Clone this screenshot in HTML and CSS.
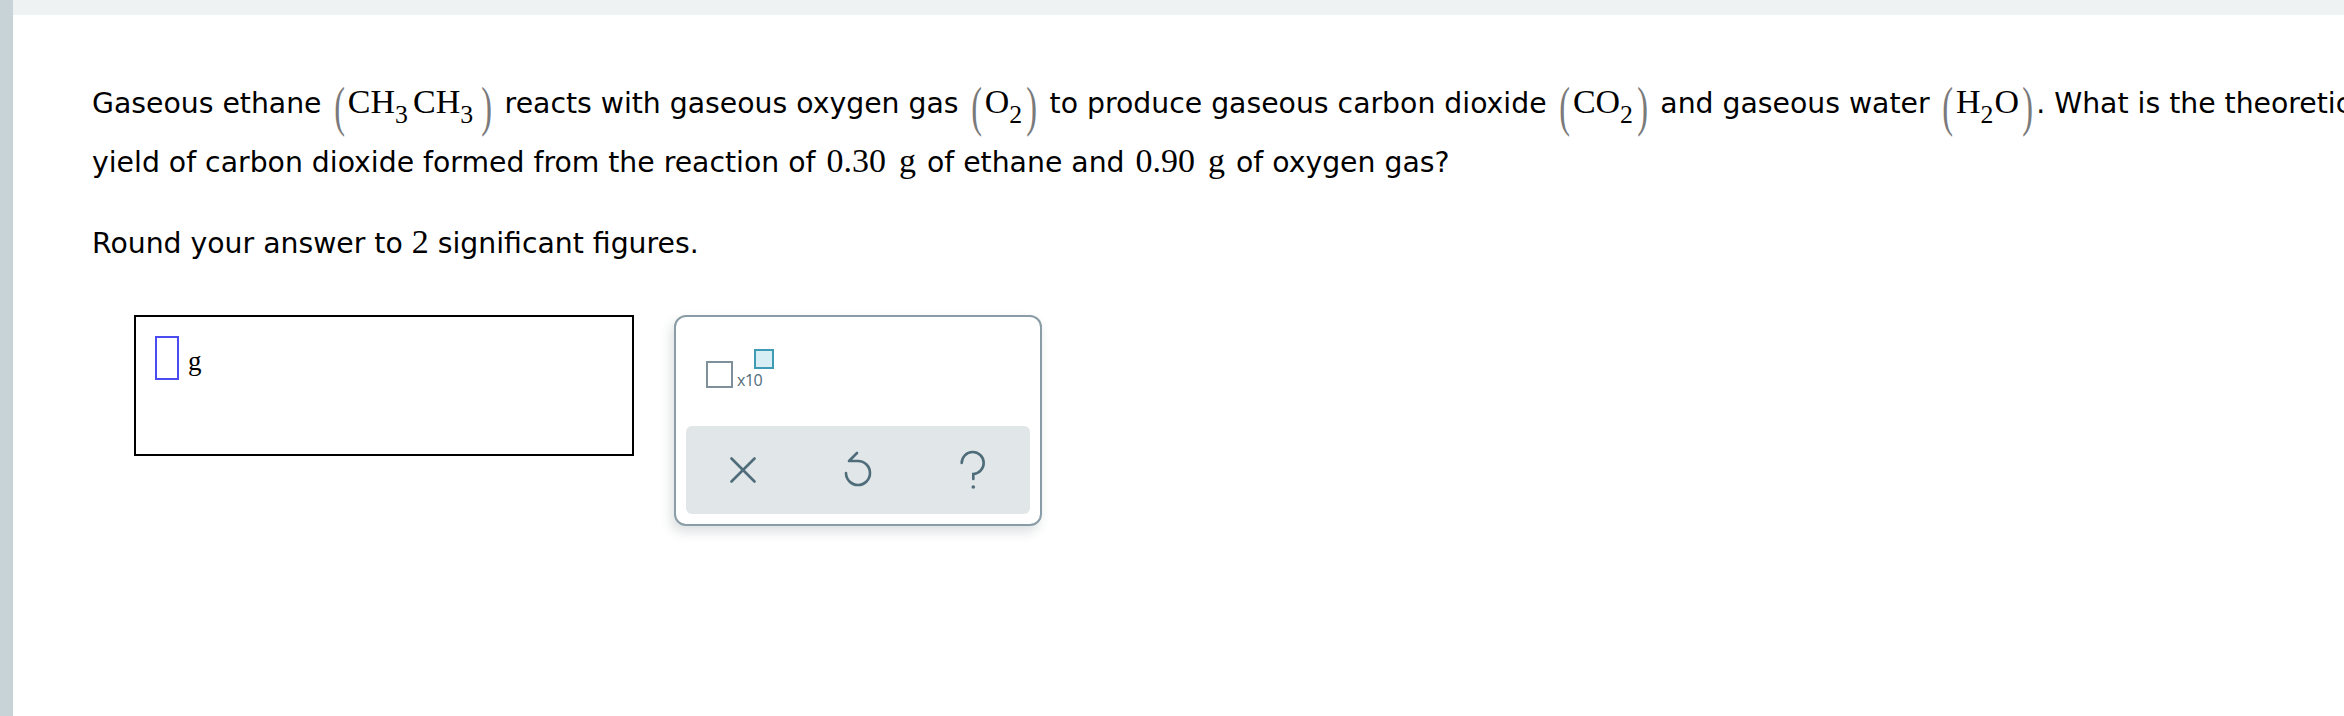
FILE: index.html
```html
<!DOCTYPE html>
<html>
<head>
<meta charset="utf-8">
<link rel="stylesheet" href="styles.css">
</head>
<body>
<div class="page">
  <div class="sidebar"></div>
  <div class="main">
    <div class="topband"></div>
    <div class="content">
      <p class="q">Gaseous ethane <span class="m eth"><span class="par">(</span>CH<sub>3</sub>CH<sub>3</sub><span class="par">)</span></span> reacts with gaseous oxygen gas <span class="m"><span class="par">(</span>O<sub>2</sub><span class="par">)</span></span> to produce gaseous carbon dioxide <span class="m"><span class="par">(</span>CO<sub>2</sub><span class="par">)</span></span> and gaseous water <span class="m"><span class="par">(</span>H<sub>2</sub>O<span class="par">)</span></span>. What is the theoretical<br>yield of carbon dioxide formed from the reaction of <span class="m num">0.30</span> <span class="m num">g</span> of ethane and <span class="m num">0.90</span> <span class="m num">g</span> of oxygen gas?</p>
      <p class="q q2">Round your answer to <span class="m">2</span> significant figures.</p>
      <div class="answer">
        <div class="inputbox">
          <span class="slot"></span><span class="unit">g</span>
        </div>
        <div class="panel">
          <div class="sci">
            <span class="mant"></span>
            <span class="expcol">
              <span class="exp"></span>
              <span class="x10">x10</span>
            </span>
          </div>
          <div class="toolbar">
            <button class="tool" aria-label="clear">
              <svg width="26" height="26" viewBox="0 0 26 26"><path d="M1.5 1.5 L24.5 24.5 M24.5 1.5 L1.5 24.5" fill="none" stroke="#4f6c7a" stroke-width="2.6" stroke-linecap="round"/></svg>
            </button>
            <button class="tool" aria-label="undo">
              <svg width="30" height="40" viewBox="0 0 30 40"><path d="M14 3 L6 11 L15 11 A12 12 0 1 1 3 23" fill="none" stroke="#4f6c7a" stroke-width="2.6" stroke-linecap="round" stroke-linejoin="round"/></svg>
            </button>
            <button class="tool" aria-label="help">
              <svg width="34" height="44" viewBox="0 0 34 44"><path d="M5.7 15 A11 11 0 1 1 17.3 26 L17.3 31" fill="none" stroke="#4f6c7a" stroke-width="2.6" stroke-linecap="round"/><circle cx="17.3" cy="39" r="1.8" fill="#4f6c7a"/></svg>
            </button>
          </div>
        </div>
      </div>
    </div>
  </div>
</div>
</body>
</html>
```
FILE: styles.css
```css
html, body {
  margin: 0;
  padding: 0;
  background: #ffffff;
}
.page {
  display: flex;
  width: 2344px;
  height: 716px;
  overflow: hidden;
}
.sidebar {
  width: 13px;
  flex: none;
  background: #c8d3d8;
}
.main {
  flex: 1;
  min-width: 0;
  overflow: hidden;
}
.topband {
  height: 15px;
  background: #eff2f3;
}
.content {
  padding: 59px 0 0 79px;
}
.q {
  margin: 0;
  font-family: "DejaVu Sans", Verdana, sans-serif;
  font-size: 28.3px;
  line-height: 59px;
  color: #000;
  white-space: nowrap;
}
.q2 {
  line-height: 51px;
  margin-top: 26px;
}
.m {
  font-family: "Liberation Serif", "Times New Roman", serif;
  font-size: 1.2em;
  line-height: 1;
}
.m sub {
  font-size: 0.76em;
  line-height: 1;
  vertical-align: -0.38em;
  padding-right: 0.04em;
}
.eth sub {
  padding-right: 0.2em;
}
.num {
  margin: 0 2px;
}
.par {
  display: inline-block;
  color: #7a7a7a;
  transform: translateY(5px) scale(0.95, 1.6);
  margin: 0 3px;
}
.answer {
  display: flex;
  align-items: flex-start;
  gap: 40px;
  margin: 46px 0 0 42px;
}
.inputbox {
  box-sizing: border-box;
  width: 500px;
  height: 141px;
  border: 2px solid #000;
  padding: 19px 0 0 19px;
  display: flex;
  align-items: flex-start;
}
.slot {
  box-sizing: border-box;
  width: 24px;
  height: 44px;
  border: 2px solid #4b4bf2;
}
.unit {
  font-family: "Liberation Serif", "Times New Roman", serif;
  font-size: 27px;
  line-height: 1;
  margin: 12px 0 0 9px;
}
.panel {
  box-sizing: border-box;
  width: 368px;
  height: 211px;
  border: 2px solid #8a9ca6;
  border-radius: 12px;
  background: #fff;
  box-shadow: -3px 6px 12px rgba(40, 60, 70, 0.16);
  padding: 32px 10px 10px 10px;
  display: flex;
  flex-direction: column;
  justify-content: space-between;
}
.sci {
  display: flex;
  align-items: flex-end;
  height: 39px;
  margin-left: 20px;
}
.mant {
  box-sizing: border-box;
  width: 27px;
  height: 27px;
  border: 2.7px solid #7e909a;
}
.expcol {
  display: flex;
  flex-direction: column;
  justify-content: space-between;
  height: 39px;
  margin-left: 4px;
}
.exp {
  box-sizing: border-box;
  width: 20px;
  height: 20px;
  border: 2.7px solid #3f9ab3;
  background: #d6eef4;
  margin-left: 17px;
}
.x10 {
  font-family: "Open Sans", "Liberation Sans", sans-serif;
  font-size: 16px;
  line-height: 16px;
  color: #4f6c7a;
  letter-spacing: -0.5px;
}
.toolbar {
  height: 88px;
  border-radius: 6px;
  background: #e1e6e8;
  display: grid;
  grid-template-columns: 1fr 1fr 1fr;
  align-items: center;
  justify-items: center;
}
.tool {
  border: 0;
  padding: 0;
  background: transparent;
  display: flex;
  align-items: center;
  justify-content: center;
}
.tool svg {
  display: block;
}
```
